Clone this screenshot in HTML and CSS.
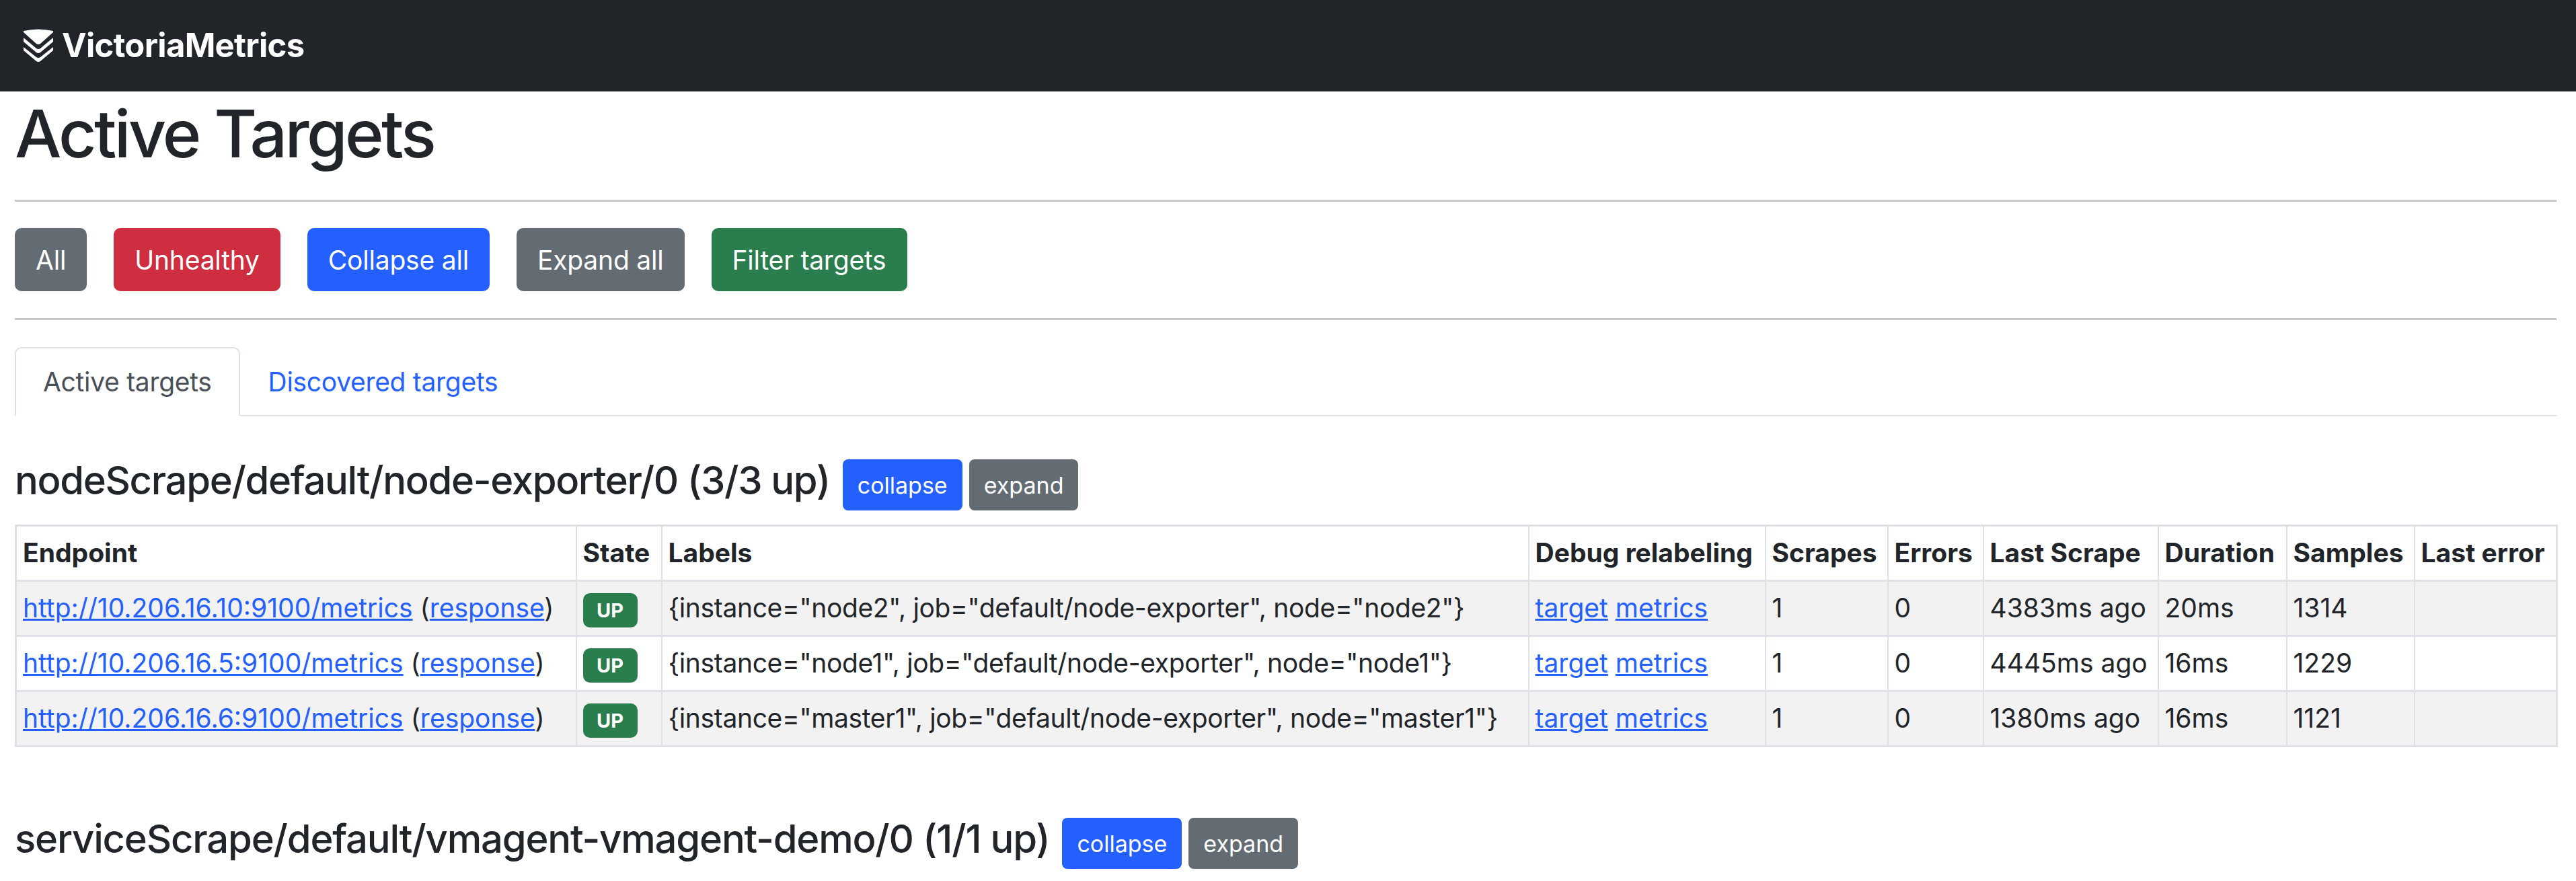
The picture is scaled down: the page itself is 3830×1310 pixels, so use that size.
FILE: index.html
```html
<!DOCTYPE html>
<html lang="en">
<head>
    <meta charset="UTF-8">
    <meta name="viewport" content="width=device-width, initial-scale=1.0">
    <title>Active Targets</title>
    <link rel="stylesheet" href="styles.css">
</head>
<body>
    <nav class="navbar">
        <a class="brand" href="#">
            <svg class="brand-logo" viewBox="0 0 44 50" fill="#fff">
                <path d="M0 3Q22 -2 44 3V5L25 22Q22 24 19 22L0 5Z"/>
                <path d="M0 13L19 29Q22 31 25 29L44 13V19L25 35Q22 37 19 35L0 19Z"/>
                <path d="M0 27L19 42Q22 44 25 42L44 27V32L25 48Q22 50 19 48L0 32Z"/>
            </svg>
            VictoriaMetrics
        </a>
    </nav>
    <main class="container">
        <h1>Active Targets</h1>
        <hr>
        <div class="toolbar">
            <button class="btn gray">All</button>
            <button class="btn red">Unhealthy</button>
            <button class="btn blue">Collapse all</button>
            <button class="btn gray">Expand all</button>
            <button class="btn green">Filter targets</button>
        </div>
        <hr class="second">
        <ul class="tabs">
            <li class="tab active">Active targets</li>
            <li class="tab"><a href="#">Discovered targets</a></li>
        </ul>

        <section class="group">
            <div class="group-head">
                <h4>nodeScrape/default/node-exporter/0 (3/3 up)</h4>
                <button class="btn-sm blue">collapse</button>
                <button class="btn-sm gray">expand</button>
            </div>
            <table>
                <colgroup>
                    <col class="c-endpoint"><col class="c-state"><col class="c-labels"><col class="c-debug">
                    <col class="c-scrapes"><col class="c-errors"><col class="c-last"><col class="c-duration">
                    <col class="c-samples"><col class="c-error">
                </colgroup>
                <thead>
                    <tr>
                        <th>Endpoint</th><th>State</th><th>Labels</th><th>Debug relabeling</th><th>Scrapes</th>
                        <th>Errors</th><th>Last Scrape</th><th>Duration</th><th>Samples</th><th>Last error</th>
                    </tr>
                </thead>
                <tbody>
                    <tr>
                        <td><a href="#">http://10.206.16.10:9100/metrics</a> (<a href="#">response</a>)</td>
                        <td><span class="badge">UP</span></td>
                        <td class="labels">{instance="node2", job="default/node-exporter", node="node2"}</td>
                        <td><a href="#">target</a> <a href="#">metrics</a></td>
                        <td>1</td><td>0</td><td>4383ms ago</td><td>20ms</td><td>1314</td><td></td>
                    </tr>
                    <tr>
                        <td><a href="#">http://10.206.16.5:9100/metrics</a> (<a href="#">response</a>)</td>
                        <td><span class="badge">UP</span></td>
                        <td class="labels">{instance="node1", job="default/node-exporter", node="node1"}</td>
                        <td><a href="#">target</a> <a href="#">metrics</a></td>
                        <td>1</td><td>0</td><td>4445ms ago</td><td>16ms</td><td>1229</td><td></td>
                    </tr>
                    <tr>
                        <td><a href="#">http://10.206.16.6:9100/metrics</a> (<a href="#">response</a>)</td>
                        <td><span class="badge">UP</span></td>
                        <td class="labels">{instance="master1", job="default/node-exporter", node="master1"}</td>
                        <td><a href="#">target</a> <a href="#">metrics</a></td>
                        <td>1</td><td>0</td><td>1380ms ago</td><td>16ms</td><td>1121</td><td></td>
                    </tr>
                </tbody>
            </table>
        </section>

        <section class="group last">
            <div class="group-head">
                <h4>serviceScrape/default/vmagent-vmagent-demo/0 (1/1 up)</h4>
                <button class="btn-sm blue">collapse</button>
                <button class="btn-sm gray">expand</button>
            </div>
        </section>
    </main>
</body>
</html>
```
FILE: styles.css
```css
* {
    box-sizing: border-box;
}

html, body {
    height: 100%;
}

body {
    margin: 0;
    overflow: hidden;
    background: #fff;
    color: #212529;
    font-family: Inter, "Liberation Sans", sans-serif;
    font-size: 39px;
    line-height: 1.5;
}

a {
    color: #245fff;
}

/* navbar */
.navbar {
    height: 136px;
    background: #212529;
    display: flex;
    align-items: center;
    padding-left: 35px;
}

.brand {
    display: flex;
    align-items: center;
    gap: 13px;
    color: #fff;
    font-size: 49px;
    font-weight: 700;
    letter-spacing: -0.7px;
    text-decoration: none;
}

.brand-logo {
    width: 44px;
    height: 50px;
}

/* page */
.container {
    padding: 0 29px 0 22px;
}

h1 {
    margin: 0;
    padding-top: 4px;
    height: 161px;
    font-size: 98px;
    font-weight: 500;
    line-height: 118px;
    letter-spacing: -3.6px;
}

hr {
    margin: 0;
    border: 0;
    border-top: 3px solid #c7c8c9;
}

hr.second {
    margin-top: 40px;
}

.toolbar {
    display: flex;
    gap: 40px;
    margin-top: 39px;
}

.btn, .btn-sm {
    border: 0;
    color: #fff;
    font-family: inherit;
}

.btn {
    height: 94px;
    padding: 0 31px;
    border-radius: 10px;
    font-size: 39px;
    letter-spacing: -0.2px;
}

.btn-sm {
    height: 76px;
    padding: 0 22px;
    border-radius: 8px;
    font-size: 34px;
}

.gray { background: #636b73; }
.red { background: #cf2e40; }
.blue { background: #245fff; }
.green { background: #2a7d4d; }

/* tabs */
.tabs {
    display: flex;
    list-style: none;
    margin: 40px 0 0;
    padding: 0;
    border-bottom: 2px solid #dee2e6;
}

.tab {
    height: 103px;
    padding: 0 40px;
    margin-bottom: -2px;
    line-height: 100px;
    border: 2px solid transparent;
    border-radius: 10px 10px 0 0;
    letter-spacing: -0.3px;
}

.tab a {
    text-decoration: none;
}

.tab.active {
    color: #495057;
    background: #fff;
    border-color: #dee2e6 #dee2e6 #fff;
}

/* target groups */
.group {
    margin-top: 64px;
}

.group.last {
    margin-top: 105px;
}

.group-head {
    display: flex;
    align-items: center;
    height: 76px;
    gap: 10px;
}

h4 {
    margin: 0 9px 14px 0;
    font-size: 58px;
    font-weight: 500;
    letter-spacing: -1.34px;
}

.last h4 {
    margin-right: 9px;
    letter-spacing: -1.2px;
}

table {
    width: 3779px;
    margin: 21px 0 0;
    table-layout: fixed;
    border-collapse: collapse;
    border: 3px solid #dee2e6;
}

.c-endpoint { width: 833px; }
.c-state { width: 127px; }
.c-labels { width: 1289px; }
.c-debug { width: 352px; }
.c-scrapes { width: 182px; }
.c-errors { width: 142px; }
.c-last { width: 260px; }
.c-duration { width: 191px; }
.c-samples { width: 190px; }
.c-error { width: 212px; }

th, td {
    height: 82px;
    padding: 0 11px 0 9px;
    text-align: left;
    white-space: nowrap;
    border: 2px solid #dee2e6;
    border-width: 3px 2px;
}

th {
    font-weight: 700;
}

td.labels {
    letter-spacing: -0.35px;
}

tbody tr:nth-child(odd) {
    background: #f2f2f2;
}

.badge {
    display: inline-block;
    width: 81px;
    height: 51px;
    border-radius: 10px;
    background: #2a7d4d;
    color: #fff;
    font-size: 29px;
    font-weight: 700;
    line-height: 51px;
    text-align: center;
    vertical-align: middle;
}
```
